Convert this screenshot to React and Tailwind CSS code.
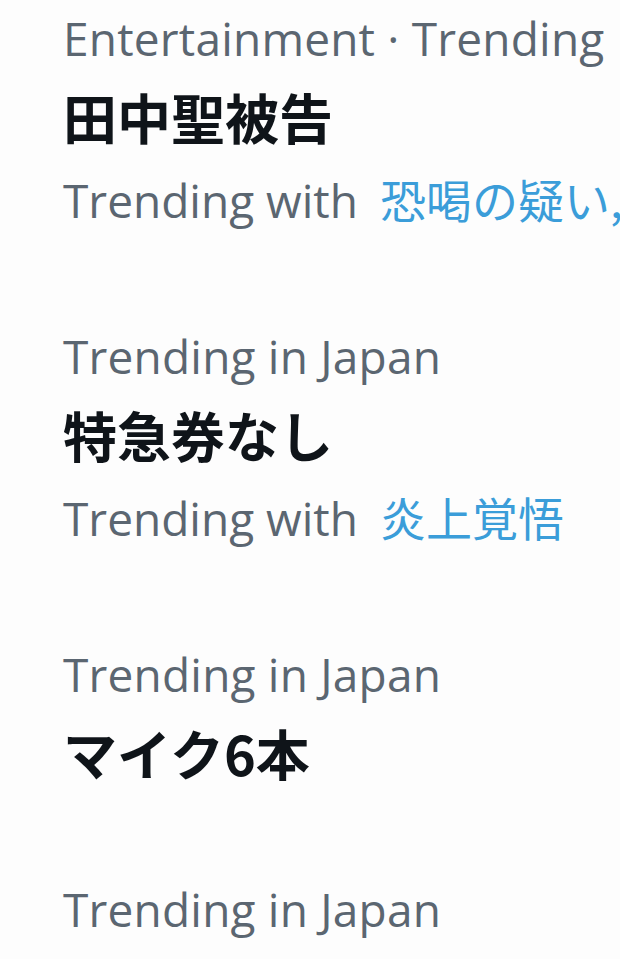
const trends = [
  {
    category: "Entertainment · Trending",
    title: "田中聖被告",
    with: "恐喝の疑い, 田中聖",
  },
  { category: "Trending in Japan", title: "特急券なし", with: "炎上覚悟" },
  { category: "Trending in Japan", title: "マイク6本" },
  { category: "Trending in Japan", title: "" },
];

function TrendItem({ item }) {
  return (
    <div className="pb-[96px]">
      <div className="font-['Open_Sans','Noto_Sans_CJK_JP',sans-serif] text-[46px] leading-[60px] tracking-[0.2px] text-[#5b6671] whitespace-nowrap">
        {item.category}
      </div>
      {item.title && (
        <div className="mt-[19px] font-['Noto_Sans_CJK_JP','Noto_Sans',sans-serif] text-[54px] leading-[60px] font-bold text-[#0f1419] whitespace-nowrap">
          {item.title}
        </div>
      )}
      {item.with && (
        <div className="mt-[21px] flex items-baseline leading-[60px] whitespace-nowrap">
          <span className="font-['Open_Sans',sans-serif] text-[46px] text-[#5b6671]">
            Trending with
          </span>
          <span className="ml-[22px] font-['Noto_Sans_CJK_JP',sans-serif] text-[46px] text-[#3b9dd9]">
            {item.with}
          </span>
        </div>
      )}
    </div>
  );
}

export default function App() {
  return (
    <div className="w-[620px] h-[959px] overflow-hidden bg-[#fdfdfd] pl-[63px] pt-[8px]">
      {trends.map((t, i) => (
        <TrendItem key={i} item={t} />
      ))}
    </div>
  );
}
